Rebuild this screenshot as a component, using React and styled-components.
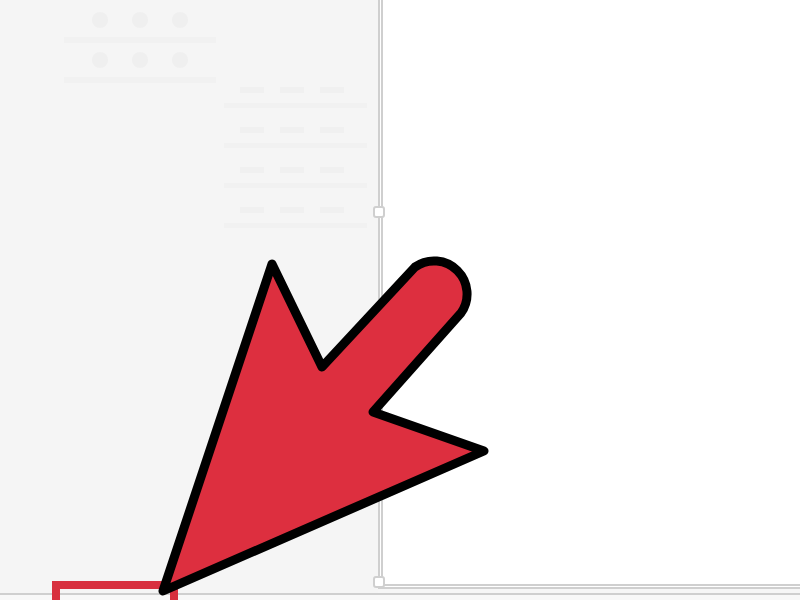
import styled, { createGlobalStyle } from 'styled-components';

const Global = createGlobalStyle`
  * { box-sizing: border-box; margin: 0; padding: 0; }
  body { background: #fff; font-family: "Liberation Sans", Arial, sans-serif; }
`;

const Screen = styled.div`
  position: relative;
  width: 800px;
  height: 600px;
  overflow: hidden;
  display: flex;
  flex-direction: column;
  background: #f6f6f6;
`;

const Workspace = styled.div`
  flex: 1;
  display: flex;
`;

const SidePane = styled.div`
  width: 378px;
  background: #f5f5f5;
  padding: 3px 0 0 64px;
  display: flex;
  flex-direction: column;
`;

const ToolRow = styled.div`
  display: flex;
  align-items: center;
  gap: 24px;
  height: 40px;
  padding-left: 28px;
  border-bottom: 6px solid #f1f1f1;
  width: 152px;
`;

const Dot = styled.span`
  width: 16px;
  height: 16px;
  border-radius: 50%;
  background: #efefef;
`;

const ListBlock = styled.div`
  margin: -15px 0 0 160px;
  display: flex;
  flex-direction: column;
`;

const ListRow = styled.div`
  height: 40px;
  display: flex;
  align-items: flex-start;
  gap: 16px;
  padding: 19px 0 0 16px;
  border-bottom: 5px solid #f1f1f1;
  width: 143px;
`;

const Dash = styled.span`
  width: 24px;
  height: 6px;
  background: #f0f0f0;
`;

const Canvas = styled.div`
  position: relative;
  flex: 1;
  background: #fff;
  border-left: 5px double #cfcfcf;
  border-bottom: 5px double #cfcfcf;
  margin-bottom: 4px;
`;

const Handle = styled.span`
  position: absolute;
  left: -10px;
  top: ${p => p.top}px;
  width: 12px;
  height: 12px;
  border: 2px solid #cfcfcf;
  border-radius: 3px;
  background: #fff;
`;

const StatusBar = styled.div`
  height: 7px;
  border-top: 2px solid #cfcfcf;
  background: #f8f8f8;
`;

const Highlight = styled.div`
  position: absolute;
  left: 52px;
  top: 581px;
  width: 126px;
  height: 30px;
  border: 8px solid #d8303f;
`;

const Overlay = styled.svg`
  position: absolute;
  left: 0;
  top: 0;
  pointer-events: none;
`;

export default function App() {
  const tools = [0, 1];
  const rows = [0, 1, 2, 3];
  return (
    <>
      <Global />
      <Screen>
        <Workspace>
          <SidePane>
            {tools.map(t => (
              <ToolRow key={t}>
                <Dot /><Dot /><Dot />
              </ToolRow>
            ))}
            <ListBlock>
              {rows.map(r => (
                <ListRow key={r}>
                  <Dash /><Dash /><Dash />
                </ListRow>
              ))}
            </ListBlock>
          </SidePane>
          <Canvas>
            <Handle top={206} />
            <Handle top={576} />
          </Canvas>
        </Workspace>
        <StatusBar />
        <Highlight />
        <Overlay width="800" height="600" viewBox="0 0 800 600">
          <path
            d="M163 591 L272 264 L322 367 L415 267 A33 33 0 0 1 461 313 L373 412 L484 451 Z"
            fill="#dd2f3f"
            stroke="#000"
            strokeWidth="9"
            strokeLinejoin="round"
          />
        </Overlay>
      </Screen>
    </>
  );
}
